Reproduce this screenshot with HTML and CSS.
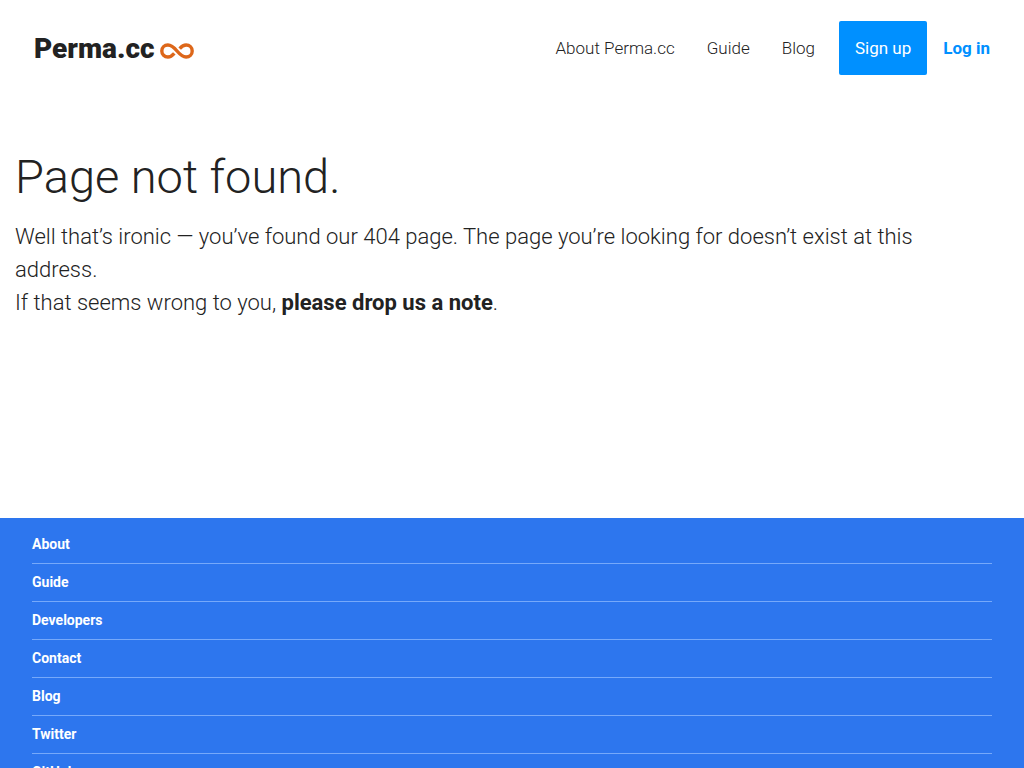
FILE: index.html
```html
<!DOCTYPE html>
<html lang="en">
<head>
<meta charset="utf-8">
<meta name="viewport" content="width=device-width, initial-scale=1">
<title>Perma.cc</title>
<link rel="stylesheet" href="styles.css">
</head>
<body>
<header class="site-header">
  <a class="logo" href="#">Perma.cc
    <svg class="logo-mark" viewBox="0 0 34 16" aria-hidden="true">
      <path d="M14.3 10.4C12.3 12.7 10.4 14 7.9 14C4.400 14 1.800 11.400 1.800 8C1.800 4.600 4.400 2 7.900 2C11.300 2 13.800 4.200 17 8C20.200 11.800 22.700 14 26.100 14C29.600 14 32.200 11.400 32.200 8C32.200 4.600 29.600 2 26.100 2C23.600 2 21.700 3.300 19.700 5.600"/>
    </svg>
  </a>
  <nav class="main-nav" aria-label="Main">
    <a class="nav-link" href="#">About Perma.cc</a>
    <a class="nav-link" href="#">Guide</a>
    <a class="nav-link" href="#">Blog</a>
    <a class="nav-link sign-up" href="#">Sign up</a>
    <a class="nav-link log-in" href="#">Log in</a>
  </nav>
</header>
<main class="content">
  <h1 class="title">Page not found.</h1>
  <p class="message">Well that’s ironic — you’ve found our 404 page. The page you’re looking for doesn’t exist at this address.</p>
  <p class="message">If that seems wrong to you, <a class="note-link" href="#">please drop us a note</a>.</p>
</main>
<footer class="site-footer">
  <ul class="footer-list">
    <li class="footer-item"><a class="footer-link" href="#">About</a></li>
    <li class="footer-item"><a class="footer-link" href="#">Guide</a></li>
    <li class="footer-item"><a class="footer-link" href="#">Developers</a></li>
    <li class="footer-item"><a class="footer-link" href="#">Contact</a></li>
    <li class="footer-item"><a class="footer-link" href="#">Blog</a></li>
    <li class="footer-item"><a class="footer-link" href="#">Twitter</a></li>
    <li class="footer-item"><a class="footer-link" href="#">GitHub</a></li>
  </ul>
</footer>
</body>
</html>
```

FILE: styles.css
```css
* {
  box-sizing: border-box;
}

body {
  margin: 0;
  background: #fff;
  color: #222;
  font-family: Roboto, "Liberation Sans", sans-serif;
  font-weight: 300;
}

a {
  color: inherit;
  text-decoration: none;
}

.site-header {
  display: flex;
  align-items: center;
  justify-content: space-between;
  padding: 21px 18px 21px 34px;
}

.logo {
  display: flex;
  align-items: center;
  gap: 5px;
  padding-top: 2px;
  font-size: 28px;
  line-height: 34px;
  font-weight: 900;
}

.logo-mark {
  width: 34px;
  height: 16px;
  margin-top: 4px;
  fill: none;
  stroke: #dd671a;
  stroke-width: 3.4;
}

.main-nav {
  display: flex;
  align-items: center;
}

.nav-link {
  padding: 16px;
  font-size: 17px;
  line-height: 22px;
}

.sign-up {
  margin-left: 8px;
  border-radius: 2px;
  background: #0090ff;
  color: #fff;
  font-weight: 400;
}

.log-in {
  color: #0090ff;
  font-weight: 700;
}

.content {
  min-height: 422px;
  padding: 53px 15px;
}

.title {
  margin: 0 0 15px;
  font-size: 47px;
  line-height: 56px;
  font-weight: 300;
}

.message {
  max-width: 930px;
  margin: 0;
  font-size: 22px;
  line-height: 33px;
}

.note-link {
  font-weight: 700;
}

.site-footer {
  padding: 8px 32px 32px;
  background: #2d76ee;
  color: #fff;
}

.footer-list {
  margin: 0;
  padding: 0;
  list-style: none;
}

.footer-item {
  border-bottom: 1px solid #76a9fa;
}

.footer-link {
  display: block;
  padding: 8px 0;
  font-size: 14px;
  line-height: 21px;
  font-weight: 700;
}
```
